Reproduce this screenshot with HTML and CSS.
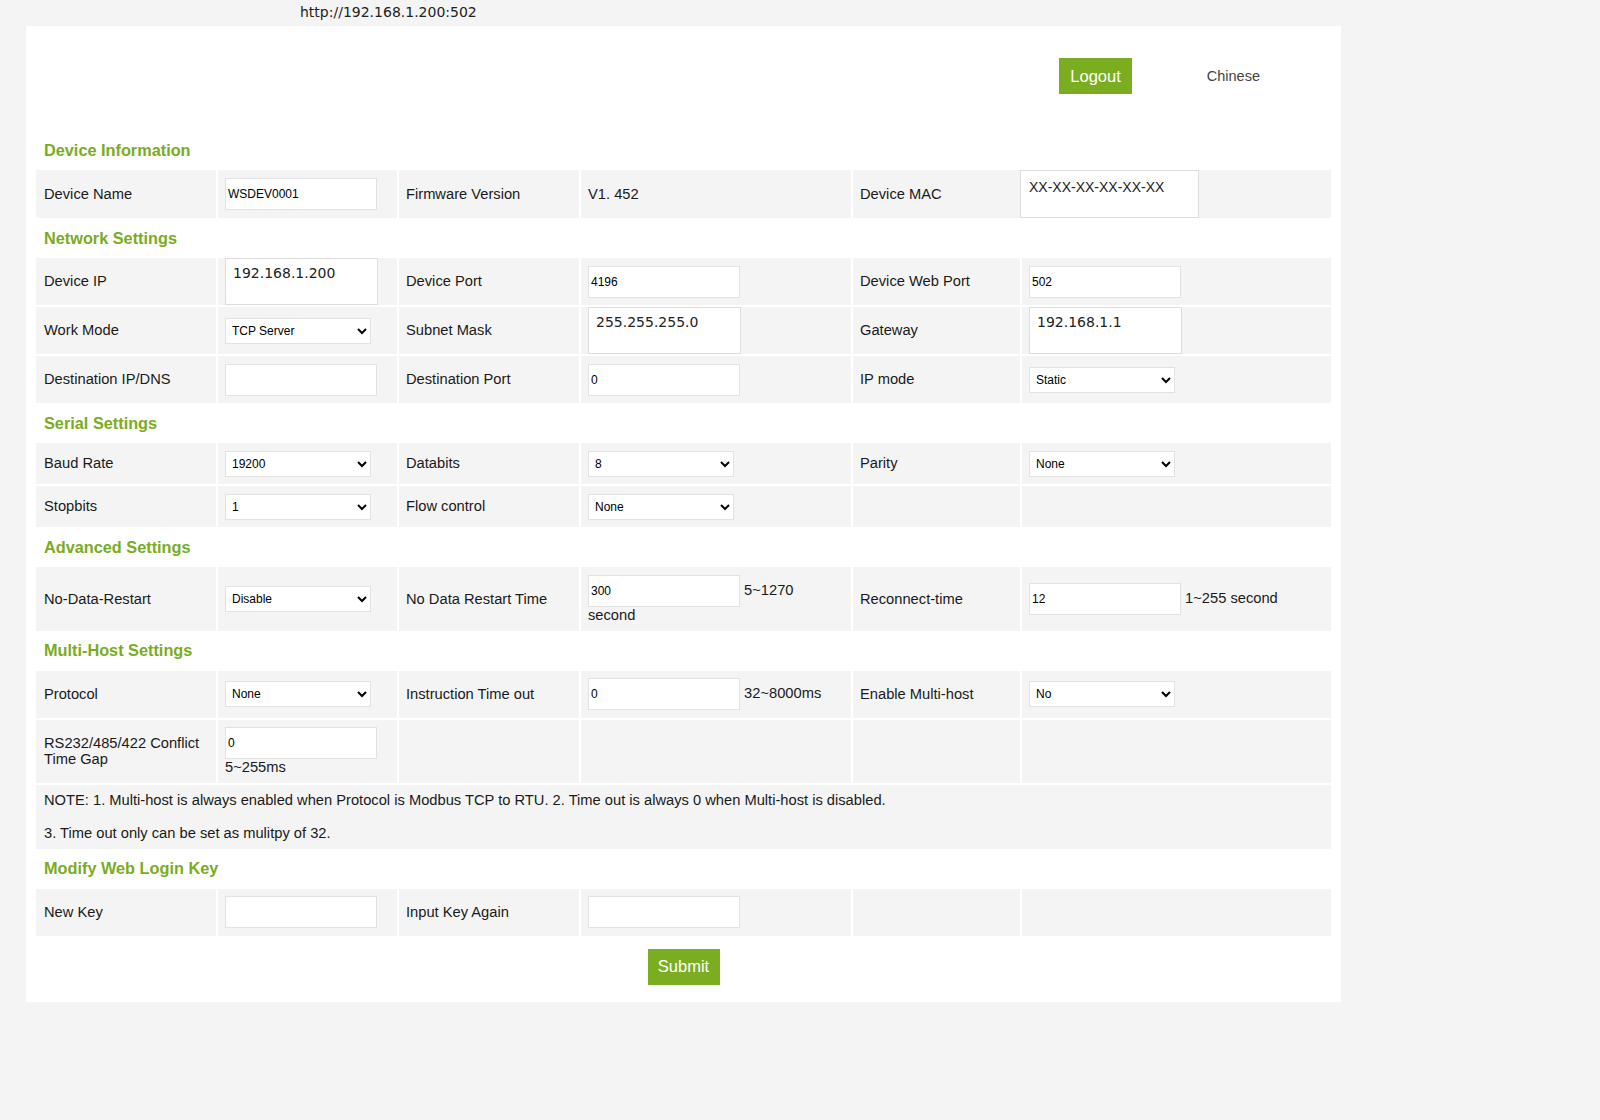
FILE: index.html
```html
<!DOCTYPE html>
<html lang="en">
<head>
    <meta charset="UTF-8">
    <meta name="viewport" content="width=device-width, initial-scale=1.0">
    <title>Device Settings</title>
    <link rel="stylesheet" href="styles.css">
</head>
<body>
    <div class="url-bar">http://192.168.1.200:502</div>
    <div class="panel">
        <div class="topbar">
            <button class="btn">Logout</button>
            <a class="lang" href="#">Chinese</a>
        </div>
        <form>
        <table class="settings">
            <colgroup>
                <col class="col-a">
                <col class="col-b">
                <col class="col-c">
                <col class="col-d">
                <col class="col-e">
                <col class="col-f">
            </colgroup>

            <tr class="section"><th colspan="6">Device Information</th></tr>
            <tr>
                <td>Device Name</td>
                <td><input class="field" type="text" value="WSDEV0001"></td>
                <td>Firmware Version</td>
                <td>V1. 452</td>
                <td>Device MAC</td>
                <td class="flush"><textarea class="box mac" readonly>XX-XX-XX-XX-XX-XX</textarea></td>
            </tr>

            <tr class="section"><th colspan="6">Network Settings</th></tr>
            <tr>
                <td>Device IP</td>
                <td class="tall"><textarea class="box">192.168.1.200</textarea></td>
                <td>Device Port</td>
                <td><input class="field" type="text" value="4196"></td>
                <td>Device Web Port</td>
                <td><input class="field" type="text" value="502"></td>
            </tr>
            <tr>
                <td>Work Mode</td>
                <td>
                    <select class="pick">
                        <option>TCP Server</option>
                        <option>TCP Client</option>
                        <option>UDP Server</option>
                        <option>UDP Client</option>
                    </select>
                </td>
                <td>Subnet Mask</td>
                <td class="tall"><textarea class="box">255.255.255.0</textarea></td>
                <td>Gateway</td>
                <td class="tall"><textarea class="box">192.168.1.1</textarea></td>
            </tr>
            <tr>
                <td>Destination IP/DNS</td>
                <td><input class="field" type="text" value=""></td>
                <td>Destination Port</td>
                <td><input class="field" type="text" value="0"></td>
                <td>IP mode</td>
                <td>
                    <select class="pick">
                        <option>Static</option>
                        <option>DHCP</option>
                    </select>
                </td>
            </tr>

            <tr class="section"><th colspan="6">Serial Settings</th></tr>
            <tr>
                <td>Baud Rate</td>
                <td>
                    <select class="pick">
                        <option>9600</option>
                        <option selected>19200</option>
                        <option>38400</option>
                        <option>57600</option>
                        <option>115200</option>
                    </select>
                </td>
                <td>Databits</td>
                <td>
                    <select class="pick">
                        <option>7</option>
                        <option selected>8</option>
                    </select>
                </td>
                <td>Parity</td>
                <td>
                    <select class="pick">
                        <option>None</option>
                        <option>Odd</option>
                        <option>Even</option>
                    </select>
                </td>
            </tr>
            <tr>
                <td>Stopbits</td>
                <td>
                    <select class="pick">
                        <option>1</option>
                        <option>2</option>
                    </select>
                </td>
                <td>Flow control</td>
                <td>
                    <select class="pick">
                        <option>None</option>
                        <option>RTS/CTS</option>
                    </select>
                </td>
                <td></td>
                <td></td>
            </tr>

            <tr class="section"><th colspan="6">Advanced Settings</th></tr>
            <tr>
                <td>No-Data-Restart</td>
                <td>
                    <select class="pick">
                        <option>Disable</option>
                        <option>Enable</option>
                    </select>
                </td>
                <td>No Data Restart Time</td>
                <td><input class="field" type="text" value="300"> 5~1270<br>second</td>
                <td>Reconnect-time</td>
                <td><input class="field" type="text" value="12"> 1~255 second</td>
            </tr>

            <tr class="section"><th colspan="6">Multi-Host Settings</th></tr>
            <tr>
                <td>Protocol</td>
                <td>
                    <select class="pick">
                        <option>None</option>
                        <option>Modbus TCP to RTU</option>
                    </select>
                </td>
                <td>Instruction Time out</td>
                <td><input class="field" type="text" value="0"> 32~8000ms</td>
                <td>Enable Multi-host</td>
                <td>
                    <select class="pick">
                        <option>No</option>
                        <option>Yes</option>
                    </select>
                </td>
            </tr>
            <tr>
                <td>RS232/485/422 Conflict Time Gap</td>
                <td><input class="field" type="text" value="0"><br>5~255ms</td>
                <td></td>
                <td></td>
                <td></td>
                <td></td>
            </tr>
            <tr>
                <td colspan="6" class="note">NOTE: 1. Multi-host is always enabled when Protocol is Modbus TCP to RTU. 2. Time out is always 0 when Multi-host is disabled.<br><br>3. Time out only can be set as mulitpy of 32.</td>
            </tr>

            <tr class="section"><th colspan="6">Modify Web Login Key</th></tr>
            <tr>
                <td>New Key</td>
                <td><input class="field" type="password" value=""></td>
                <td>Input Key Again</td>
                <td><input class="field" type="password" value=""></td>
                <td></td>
                <td></td>
            </tr>
        </table>
        <div class="actions">
            <button class="btn" type="button">Submit</button>
        </div>
        </form>
    </div>
</body>
</html>
```

FILE: styles.css
```css
body {
    margin: 0;
    padding: 0;
    background-color: #f4f4f4;
    font-family: "Liberation Sans", Arial, sans-serif;
    font-size: 14.7px;
    color: #1a1a1a;
}
.url-bar {
    height: 26px;
    line-height: 24px;
    padding-left: 300px;
    font-family: "DejaVu Sans", sans-serif;
    font-size: 14px;
    color: #222;
}
.panel {
    width: 1315px;
    margin-left: 26px;
    padding: 0 8px 17px 8px;
    box-sizing: border-box;
    background: #ffffff;
}
.topbar {
    height: 104px;
    display: flex;
    justify-content: flex-end;
    align-items: flex-start;
    gap: 75px;
    padding: 32px 73px 0 0;
    box-sizing: border-box;
}
.lang {
    line-height: 36px;
    font-size: 14.5px;
    color: #444;
    text-decoration: none;
}
.btn {
    height: 36px;
    padding: 0 11px;
    border: none;
    background: #7bad21;
    color: #ffffff;
    font-family: "Liberation Sans", Arial, sans-serif;
    font-size: 16.5px;
    cursor: pointer;
}

/* settings grid */
.settings {
    width: 100%;
    table-layout: fixed;
    border-collapse: separate;
    border-spacing: 2px;
}
.col-a { width: 180px; }
.col-b { width: 179px; }
.col-c { width: 180px; }
.col-d { width: 270px; }
.col-e { width: 167px; }
.col-f { width: 309px; }
.settings td {
    background: #f4f4f4;
    padding: 7.5px 7px;
    vertical-align: middle;
    line-height: 16.6px;
}
.settings td:first-child {
    padding-left: 8px;
}
.settings td.tall {
    padding-top: 0;
    padding-bottom: 0;
}
.settings td.flush {
    padding: 0;
}
.section th {
    height: 36px;
    padding: 0 8px;
    text-align: left;
    font-size: 16.3px;
    font-weight: bold;
    color: #79ac1f;
    background: #ffffff;
}
.settings td.note {
    padding-top: 7px;
    padding-bottom: 7px;
}

/* form controls */
.field {
    width: 152px;
    height: 32px;
    padding: 1px 2px;
    box-sizing: border-box;
    border: 1px solid #e2e2e2;
    background: #ffffff;
    font-family: "Liberation Sans", Arial, sans-serif;
    font-size: 12px;
    color: #000;
    outline: none;
}
.pick {
    width: 146px;
    height: 26px;
    padding: 0 2px;
    box-sizing: border-box;
    border: 1px solid #e2e2e2;
    border-radius: 0;
    background: #ffffff;
    font-family: "Liberation Sans", Arial, sans-serif;
    font-size: 12px;
    color: #000;
}
.box {
    display: block;
    width: 153px;
    height: 47px;
    padding: 6px 7px;
    box-sizing: border-box;
    border: 1px solid #dddddd;
    background: #ffffff;
    font-family: "DejaVu Sans", sans-serif;
    font-size: 14px;
    color: #222;
    resize: none;
    outline: none;
    overflow: hidden;
}
.mac {
    width: 179px;
    height: 48px;
    margin-left: -2px;
    font-family: "Liberation Sans", Arial, sans-serif;
    padding: 8px 8px;
}
.actions {
    text-align: center;
    padding-top: 11px;
}
.actions .btn {
    width: 72px;
    padding: 0;
}
```
